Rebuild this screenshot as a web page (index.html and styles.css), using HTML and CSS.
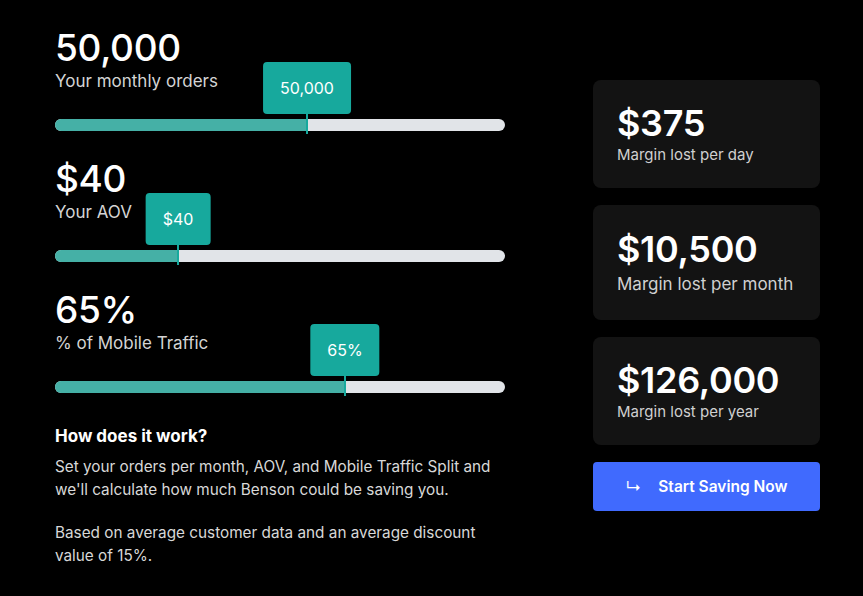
FILE: index.html
```html
<!DOCTYPE html>
<html>
<head>
<meta charset="utf-8">
<link rel="stylesheet" href="styles.css">
</head>
<body>
<div class="page">
  <div class="left">
    <div class="field">
      <div class="value">50,000</div>
      <div class="label">Your monthly orders</div>
      <div class="slider">
        <div class="track"><div class="fill" style="width:252px"></div></div>
        <div class="thumb" style="left:252px"><div class="tip">50,000</div></div>
      </div>
    </div>
    <div class="field">
      <div class="value">$40</div>
      <div class="label">Your AOV</div>
      <div class="slider">
        <div class="track"><div class="fill" style="width:123px"></div></div>
        <div class="thumb" style="left:123px"><div class="tip">$40</div></div>
      </div>
    </div>
    <div class="field">
      <div class="value">65%</div>
      <div class="label">% of Mobile Traffic</div>
      <div class="slider">
        <div class="track"><div class="fill" style="width:290px"></div></div>
        <div class="thumb" style="left:290px"><div class="tip">65%</div></div>
      </div>
    </div>
    <div class="info">
      <h3 class="info-title">How does it work?</h3>
      <p class="info-text">Set your orders per month, AOV, and Mobile Traffic Split and we'll calculate how much Benson could be saving you.</p>
      <p class="info-text">Based on average customer data and an average discount value of 15%.</p>
    </div>
  </div>
  <div class="right">
    <div class="card">
      <div class="card-value">$375</div>
      <div class="card-label">Margin lost per day</div>
    </div>
    <div class="card card-mid">
      <div class="card-value">$10,500</div>
      <div class="card-label">Margin lost per month</div>
    </div>
    <div class="card">
      <div class="card-value">$126,000</div>
      <div class="card-label">Margin lost per year</div>
    </div>
    <a class="cta" href="#"><span class="cta-arrow">↳</span><span>Start Saving Now</span></a>
  </div>
</div>
</body>
</html>
```
FILE: styles.css
```css
* { box-sizing: border-box; }
html, body { margin: 0; padding: 0; background: #000; }
body {
  font-family: Inter, "Noto Sans", sans-serif;
  color: #fff;
  width: 863px;
  height: 596px;
  overflow: hidden;
}
.page {
  display: flex;
  padding: 28px 0 0 55px;
  gap: 88px;
}
.left { width: 450px; display: flex; flex-direction: column; }
.field { margin-bottom: 28px; }
.value {
  font-size: 37px;
  line-height: 40px;
  font-weight: 500;
  letter-spacing: -0.3px;
}
.label {
  font-size: 17px;
  line-height: 22px;
  margin-top: 2px;
  color: #d4d4d4;
}
.slider { position: relative; margin-top: 27px; height: 12px; }
.track {
  height: 12px;
  border-radius: 6px;
  background: #e1e4e8;
  overflow: hidden;
}
.fill { height: 100%; background: #45b0a6; }
.thumb {
  position: absolute;
  top: -5px;
  width: 2px;
  height: 20px;
  margin-left: -1px;
  background: #17a99d;
}
.tip {
  position: absolute;
  bottom: 20px;
  left: 1px;
  transform: translateX(-50%);
  height: 52px;
  padding: 0 17px;
  display: flex;
  align-items: center;
  justify-content: center;
  background: #17a99d;
  border-radius: 4px;
  font-size: 16px;
  white-space: nowrap;
}
.info { margin-top: 4px; }
.info-title {
  margin: 0 0 8px;
  font-size: 17px;
  line-height: 22px;
  font-weight: 700;
}
.info-text {
  margin: 0 0 20px;
  font-size: 15.3px;
  line-height: 23px;
  color: #d8d8d8;
}
.right {
  width: 227px;
  padding-top: 52px;
  display: flex;
  flex-direction: column;
  gap: 17px;
}
.card {
  background: #131313;
  border-radius: 8px;
  padding: 23px 24px;
  height: 108px;
}
.card-mid { height: 115px; padding-top: 24px; }
.card-value {
  font-size: 36px;
  line-height: 40px;
  font-weight: 600;
  letter-spacing: -0.3px;
}
.card-label {
  font-size: 15px;
  line-height: 22px;
  margin-top: 1px;
  color: #d0d0d0;
}
.card-mid .card-label { margin-top: 4px; font-size: 17px; }
.cta {
  display: flex;
  align-items: center;
  justify-content: center;
  gap: 17px;
  height: 49px;
  background: #406afe;
  border-radius: 4px;
  color: #fff;
  text-decoration: none;
  font-weight: 600;
  font-size: 15.5px;
}
.cta-arrow { font-weight: 400; font-size: 16px; }
```
